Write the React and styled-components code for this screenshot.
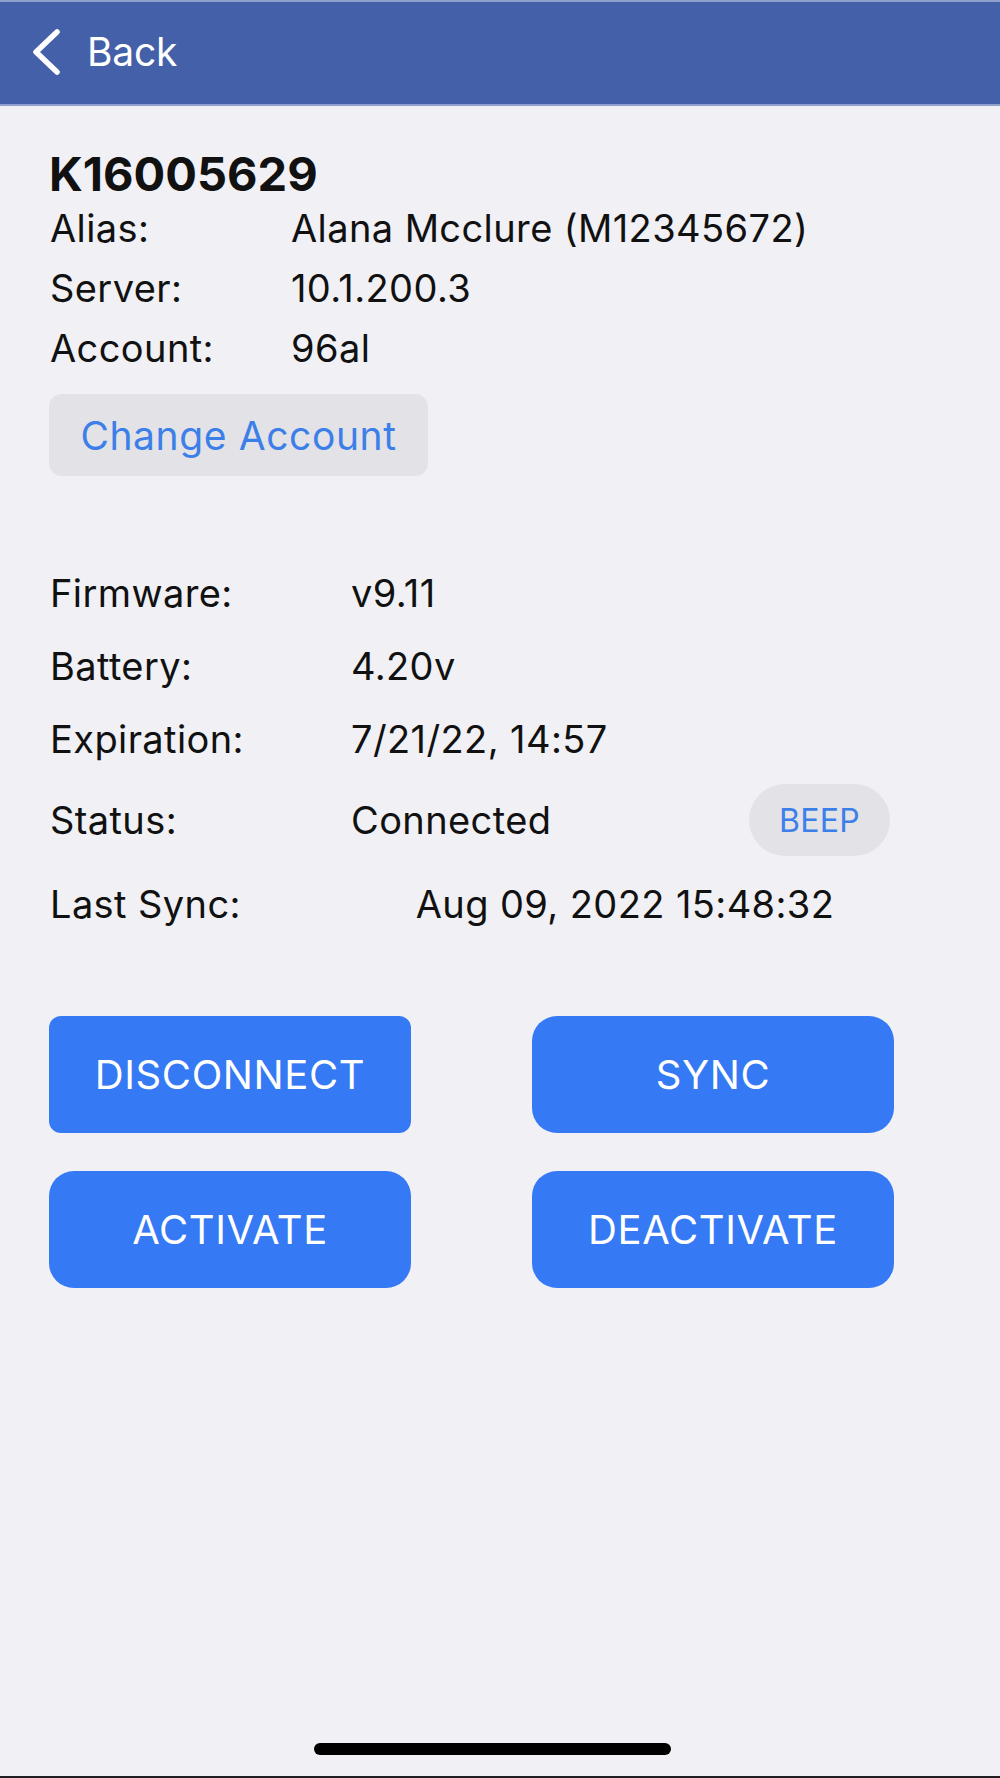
import React from "react";
import styled, { createGlobalStyle } from "styled-components";

const Global = createGlobalStyle`
  html, body { margin: 0; padding: 0; background: #F0F0F5; }
  body { font-family: Inter, "Noto Sans", "Liberation Sans", sans-serif; -webkit-font-smoothing: antialiased; }
  * { box-sizing: border-box; }
`;

const Screen = styled.div`
  width: 1000px;
  height: 1778px;
  background: #F0F0F5;
  display: flex;
  flex-direction: column;
  border-bottom: 2px solid #1f1f22;
`;

const NavBar = styled.header`
  height: 106px;
  background: #4460A8;
  border-top: 2px solid #8FA0CC;
  border-bottom: 2px solid #8FA0CC;
  display: flex;
  align-items: center;
  padding-left: 32px;
`;

const BackButton = styled.button`
  display: flex;
  align-items: center;
  gap: 25px;
  background: none;
  border: none;
  padding: 0;
  color: #fff;
  font-family: Inter, sans-serif;
  font-size: 39px;
  font-weight: 400;
  letter-spacing: -0.2px;
  margin-top: -3px;
`;

const Content = styled.main`
  flex: 1;
  display: flex;
  flex-direction: column;
  padding: 0 49px;
`;

const Title = styled.h1`
  margin: 44px 0 0;
  font-size: 47px;
  font-weight: 700;
  line-height: 48px;
  color: #111;
  letter-spacing: 0;
`;

const InfoRow = styled.div`
  display: grid;
  grid-template-columns: ${p => p.$labelWidth}px 1fr auto;
  align-items: center;
  height: ${p => p.$h}px;
  font-size: 38px;
  color: #111;
  letter-spacing: 0.4px;
`;

const Label = styled.span`
  padding-left: 1px;
`;

const Value = styled.span`
  text-align: ${p => (p.$center ? "center" : "left")};
  padding-right: ${p => (p.$center ? "52px" : "0")};
`;

const GrayButton = styled.button`
  align-self: flex-start;
  margin-top: 16px;
  width: 379px;
  height: 82px;
  border: none;
  border-radius: 13px;
  background: #E2E2E7;
  color: #3D7FE8;
  font-family: Inter, sans-serif;
  font-size: 39px;
  letter-spacing: 0.6px;
  padding: 0;
`;

const Details = styled.section`
  margin-top: 80px;
  display: flex;
  flex-direction: column;
`;

const BeepButton = styled.button`
  width: 141px;
  height: 72px;
  border: none;
  border-radius: 36px;
  background: #E2E2E7;
  color: #3D7FE8;
  font-family: Inter, sans-serif;
  font-size: 32px;
  letter-spacing: 0.3px;
  padding: 0;
  margin-right: 61px;
`;

const ActionGrid = styled.div`
  margin-top: 74px;
  display: grid;
  grid-template-columns: 362px 362px;
  column-gap: 121px;
  row-gap: 38px;
`;

const ActionButton = styled.button`
  height: 117px;
  border: none;
  border-radius: ${p => p.$radius}px;
  background: #3579F4;
  color: #fff;
  font-family: Inter, sans-serif;
  font-size: 40px;
  letter-spacing: 0.6px;
  padding: 0;
`;

const HomeBar = styled.div`
  align-self: center;
  width: 357px;
  height: 12px;
  border-radius: 6px;
  background: #000;
  margin: 0 15px 21px 0;
`;

const Spacer = styled.div`
  flex: 1;
`;

function Chevron() {
  return (
    <svg width="30" height="46" viewBox="0 0 30 46" fill="none">
      <polyline points="25,3 4,23 25,43" stroke="#fff" strokeWidth="5.5" strokeLinecap="round" strokeLinejoin="round" />
    </svg>
  );
}

export default function App() {
  const top = [
    ["Alias:", "Alana Mcclure (M12345672)"],
    ["Server:", "10.1.200.3"],
    ["Account:", "96al"],
  ];
  return (
    <>
      <Global />
      <Screen>
        <NavBar>
          <BackButton>
            <Chevron />
            Back
          </BackButton>
        </NavBar>
        <Content>
          <Title>K16005629</Title>
          {top.map(([l, v]) => (
            <InfoRow key={l} $labelWidth={242} $h={60}>
              <Label>{l}</Label>
              <Value>{v}</Value>
            </InfoRow>
          ))}
          <GrayButton>Change Account</GrayButton>
          <Details>
            <InfoRow $labelWidth={302} $h={73}>
              <Label>Firmware:</Label>
              <Value>v9.11</Value>
            </InfoRow>
            <InfoRow $labelWidth={302} $h={73}>
              <Label>Battery:</Label>
              <Value>4.20v</Value>
            </InfoRow>
            <InfoRow $labelWidth={302} $h={73}>
              <Label>Expiration:</Label>
              <Value>7/21/22, 14:57</Value>
            </InfoRow>
            <InfoRow $labelWidth={302} $h={90}>
              <Label>Status:</Label>
              <Value>Connected</Value>
              <BeepButton>BEEP</BeepButton>
            </InfoRow>
            <InfoRow $labelWidth={302} $h={77}>
              <Label>Last Sync:</Label>
              <Value $center>Aug 09, 2022 15:48:32</Value>
            </InfoRow>
          </Details>
          <ActionGrid>
            <ActionButton $radius={12}>DISCONNECT</ActionButton>
            <ActionButton $radius={25}>SYNC</ActionButton>
            <ActionButton $radius={25}>ACTIVATE</ActionButton>
            <ActionButton $radius={25}>DEACTIVATE</ActionButton>
          </ActionGrid>
          <Spacer />
          <HomeBar />
        </Content>
      </Screen>
    </>
  );
}
